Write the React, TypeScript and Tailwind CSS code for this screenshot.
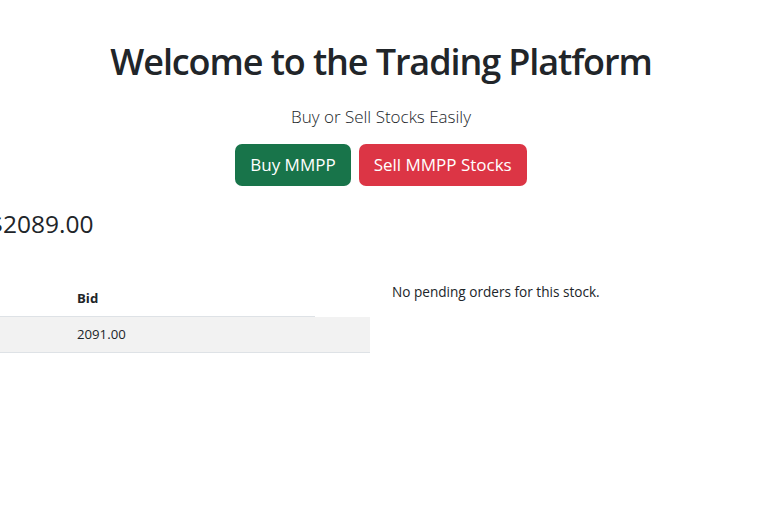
import React from "react";

export default function App() {
  return (
    <div className="w-[768px] h-[512px] overflow-hidden bg-white text-[#212529]" style={{ fontFamily: '"Open Sans", "Noto Sans", sans-serif' }}>
      <div className="flex flex-col items-center pt-[38px] pr-[6px]">
        <h1 className="text-[36px] leading-[48px] font-semibold tracking-[-1.1px]">Welcome to the Trading Platform</h1>
        <p className="mt-[16px] text-[17px] leading-[30px] font-light">Buy or Sell Stocks Easily</p>
        <div className="mt-[12px] flex gap-[8px]">
          <button className="h-[42px] px-[15px] rounded-[7px] bg-[#18744a] text-white text-[17px]">Buy MMPP</button>
          <button className="h-[42px] px-[15px] rounded-[7px] bg-[#dc3545] text-white text-[17px]">Sell MMPP Stocks</button>
        </div>
      </div>
      <div className="mt-[21px] flex">
        <h3 className="-ml-[11px] text-[24.5px] leading-[34px] font-medium">$2089.00</h3>
      </div>
      <div className="mt-[41px] flex">
        <div className="w-[380px] shrink-0">
          <div className="-ml-[232px] w-[602px] text-[13.2px]">
            <div className="flex h-[35px] items-center">
              <div className="w-[301px] h-full border-b border-[#dee2e6] px-[8px] flex items-center font-bold">Ask</div>
              <div className="w-[246px] h-full border-b border-[#dee2e6] px-[8px] flex items-center font-bold">Bid</div>
              <div className="w-[55px]" />
            </div>
            <div className="flex h-[36px] items-center bg-[#f2f2f2] border-b border-[#dee2e6]">
              <div className="w-[301px] px-[8px]">2089.00</div>
              <div className="w-[246px] px-[8px]">2091.00</div>
              <div className="w-[55px]" />
            </div>
          </div>
        </div>
        <div className="pl-[12px] -mt-[2px]">
          <p className="text-[13.6px] leading-[24px]">No pending orders for this stock.</p>
        </div>
      </div>
    </div>
  );
}
